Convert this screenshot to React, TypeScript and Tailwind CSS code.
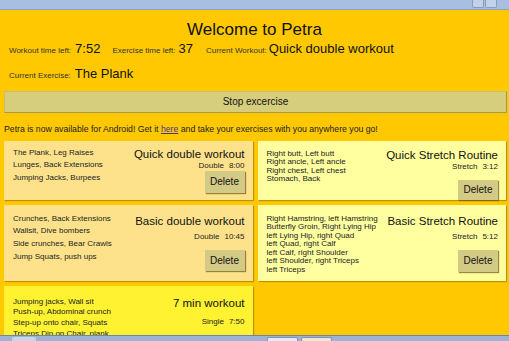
const cards = [
  {
    title: "Quick double workout",
    kind: "Double",
    time: "8:00",
    items: ["The Plank, Leg Raises", "Lunges, Back Extensions", "Jumping Jacks, Burpees"],
    card: "h-[59px] bg-[#fee28b]",
    list: "pt-[6px] leading-[12.7px]",
    right: "pt-[7px]",
    sub: "mt-0",
    btn: "mt-0 h-[22px]",
  },
  {
    title: "Quick Stretch Routine",
    kind: "Stretch",
    time: "3:12",
    items: ["Right butt, Left butt", "Right ancle, Left ancle", "Right chest, Left chest", "Stomach, Back"],
    card: "h-[59px] bg-[#ffffa0]",
    list: "pt-[9px] leading-[8.6px]",
    right: "pt-[8px]",
    sub: "mt-0",
    btn: "mt-[8px] h-[20px]",
  },
  {
    title: "Basic double workout",
    kind: "Double",
    time: "10:45",
    items: ["Crunches, Back Extensions", "Wallsit, Dive bombers", "Side crunches, Bear Crawls", "Jump Squats, push ups"],
    card: "h-[76px] bg-[#fee28b]",
    list: "pt-[8px] leading-[12.9px]",
    right: "pt-[10px]",
    sub: "mt-[4px]",
    btn: "mt-[8px] h-[21px]",
  },
  {
    title: "Basic Stretch Routine",
    kind: "Stretch",
    time: "5:12",
    items: [
      "Right Hamstring, left Hamstring",
      "Butterfly Groin, Right Lying Hip",
      "left Lying Hip, right Quad",
      "left Quad, right Calf",
      "left Calf, right Shoulder",
      "left Shoulder, right Triceps",
      "left Triceps",
    ],
    card: "h-[76px] bg-[#ffffa0]",
    list: "pt-[10px] leading-[8.6px]",
    right: "pt-[10px]",
    sub: "mt-[4px]",
    btn: "mt-[8px] h-[22px]",
  },
  {
    title: "7 min workout",
    kind: "Single",
    time: "7:50",
    items: [
      "Jumping jacks, Wall sit",
      "Push-up, Abdominal crunch",
      "Step-up onto chair, Squats",
      "Triceps Dip on Chair, plank",
      "High knees running, Lunges",
    ],
    card: "h-[80px] bg-[#fff231]",
    list: "pt-[11px] leading-[10.7px]",
    right: "pt-[11px]",
    sub: "mt-[7px]",
    btn: "mt-[10px] h-[22px]",
  },
];

function WorkoutCard({ c }: { c: (typeof cards)[number] }) {
  return (
    <div className={`flex justify-between pl-[9px] pr-[8px] shadow-[1px_1px_1px_rgba(140,100,0,0.55)] ${c.card}`}>
      <div className={`text-[8px] text-[#222] ${c.list}`}>
        {c.items.map((i) => (
          <div key={i} className="whitespace-nowrap">
            {i}
          </div>
        ))}
      </div>
      <div className={`flex flex-col items-end ${c.right}`}>
        <div className="text-[11.5px] leading-[13px] text-[#111] whitespace-nowrap">{c.title}</div>
        <div className={`flex text-[8px] leading-[10px] text-[#222] ${c.sub}`}>
          <span>{c.kind}</span>
          <span className="ml-[5px]">{c.time}</span>
        </div>
        <button
          className={`w-[40px] ${c.btn} bg-[#d3ca86] text-[10px] text-[#111] shadow-[1px_1px_1px_rgba(110,90,20,0.7)]`}
        >
          Delete
        </button>
      </div>
    </div>
  );
}

export default function App() {
  return (
    <div className="flex h-[341px] w-[509px] flex-col overflow-hidden font-['Liberation_Sans',Arial,sans-serif]">
      <div className="flex h-[10px] shrink-0 justify-end border-b border-[#8fa3bf] bg-[#a8bfe1] pr-[12px]">
        <div className="flex h-[8px] gap-[1px]">
          <div className="w-[12px] rounded-b-[2px] border border-t-0 border-[#8b9cb6] bg-[#c3d2ea]" />
          <div className="w-[12px] rounded-b-[2px] border border-t-0 border-[#8b9cb6] bg-[#c3d2ea]" />
        </div>
      </div>

      <div className="h-[325px] shrink-0 overflow-hidden bg-[#ffc800] text-[#111]">
        <div className="pt-[10px] text-center text-[17px] leading-[19px]">Welcome to Petra</div>

        <div className="mt-[2px] flex items-baseline pl-[9px] leading-[16px] whitespace-nowrap">
          <span className="text-[8px] text-[#333]">Workout time left:</span>
          <span className="ml-[4px] text-[13px]">7:52</span>
          <span className="ml-[12px] text-[8px] text-[#333]">Exercise time left:</span>
          <span className="ml-[3px] text-[13px]">37</span>
          <span className="ml-[13px] text-[8px] text-[#333]">Current Workout:</span>
          <span className="ml-[2px] text-[13px]">Quick double workout</span>
        </div>

        <div className="mt-[7px] flex items-baseline pl-[9px] leading-[16px]">
          <span className="text-[8px] text-[#333]">Current Exercise:</span>
          <span className="ml-[4px] text-[13px]">The Plank</span>
        </div>

        <div className="mt-[4px] pl-[4px] pr-[2px]">
          <button className="h-[22px] w-full border border-[#c9bf6f] border-b-[#a39a50] border-r-[#a39a50] bg-[#d6cd7d] text-[10px] text-[#111]">
            Stop excercise
          </button>
        </div>

        <div className="mt-[11px] pl-[4px] text-[8.7px] leading-[10px] text-[#222] whitespace-nowrap">
          Petra is now available for Android! Get it{" "}
          <span className="text-[#4b2f8f] underline">here</span> and take your exercises with you anywhere you go!
        </div>

        <div className="mt-[7px] grid grid-cols-2 gap-x-[5px] gap-y-[5px] pl-[4px] pr-[3px] items-start">
          {cards.map((c) => (
            <WorkoutCard key={c.title} c={c} />
          ))}
        </div>
      </div>

      <div className="flex h-[6px] shrink-0 items-end border-t border-[#6f84a6] bg-[#9cb2d7]">
        <div className="ml-[12px] h-[4px] w-[24px] rounded-t-[2px] bg-[#c9d6ea]" />
        <div className="ml-[231px] h-[4px] w-[31px] rounded-t-[2px] border border-b-0 border-[#7d92b4] bg-[#e4ebf5]" />
        <div className="ml-[3px] h-[4px] w-[31px] rounded-t-[2px] border border-b-0 border-[#7d92b4] bg-[#eee7cf]" />
      </div>
    </div>
  );
}
